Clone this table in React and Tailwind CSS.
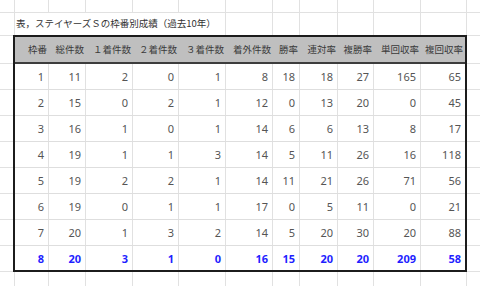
const HEADERS = ['枠番', '総件数', '１着件数', '２着件数', '３着件数', '着外件数', '勝率', '連対率', '複勝率', '単回収率', '複回収率'];

const ROWS = [
  [1, 11, 2, 0, 1, 8, 18, 18, 27, 165, 65],
  [2, 15, 0, 2, 1, 12, 0, 13, 20, 0, 45],
  [3, 16, 1, 0, 1, 14, 6, 6, 13, 8, 17],
  [4, 19, 1, 1, 3, 14, 5, 11, 26, 16, 118],
  [5, 19, 2, 2, 1, 14, 11, 21, 26, 71, 56],
  [6, 19, 0, 1, 1, 17, 0, 5, 11, 0, 21],
  [7, 20, 1, 3, 2, 14, 5, 20, 30, 20, 88],
];

const TOTAL = [8, 20, 3, 1, 0, 16, 15, 20, 20, 209, 58];

// table column widths (right gridline included)
const COLS = ['w-[34px]', 'w-[37px]', 'w-[47px]', 'w-[46px]', 'w-[47px]', 'w-[47px]', 'w-[27px]', 'w-[38px]', 'w-[36px]', 'w-[47px]', 'w-[44px]'];

// sheet columns outside the table
const SHEET = ['w-[15px]', 'w-[34px]', 'w-[37px]', 'w-[47px]', 'w-[46px]', 'w-[47px]', 'w-[47px]', 'w-[27px]', 'w-[38px]', 'w-[36px]', 'w-[47px]', 'w-[46px]'];
const TITLE_REST = ['w-[47px]', 'w-[27px]', 'w-[38px]', 'w-[36px]', 'w-[47px]', 'w-[46px]'];

function SheetRow({ cols, height, bottom }) {
  return (
    <div className={`flex ${height} shrink-0`}>
      {cols.map((w, i) => (
        <div key={i} className={`${w} shrink-0 border-r border-[#e1e1e1] ${bottom ? 'border-b' : ''}`} />
      ))}
      <div className={`flex-1 ${bottom ? 'border-b border-[#e1e1e1]' : ''}`} />
    </div>
  );
}

function Margin({ className }) {
  return (
    <div className={`${className} shrink-0 flex flex-col`}>
      <div className="h-[29px] border-t border-b border-[#e1e1e1]" />
      {[0, 1, 2, 3, 4, 5, 6].map((i) => (
        <div key={i} className="h-[26px] border-b border-[#e1e1e1]" />
      ))}
      <div className="h-[26px] border-b border-[#e1e1e1]" />
    </div>
  );
}

function DataRow({ values, last }) {
  return (
    <div className={`flex shrink-0 ${last ? 'h-[24px]' : 'h-[26px] border-b border-[#dedede]'}`}>
      {values.map((v, i) => (
        <div
          key={i}
          className={`${COLS[i]} shrink-0 flex items-center justify-end pr-[4px] ${i < values.length - 1 ? 'border-r border-[#e1e1e1]' : ''} ${
            last ? 'text-[#1f1fff] font-bold' : 'text-[#555555]'
          }`}
        >
          {v}
        </div>
      ))}
    </div>
  );
}

export default function App() {
  return (
    <div className="w-[480px] h-[286px] overflow-hidden bg-white flex flex-col font-['Noto_Sans','Noto_Sans_CJK_JP',sans-serif] text-[11px] leading-none">
      <SheetRow cols={SHEET} height="h-[13px]" bottom />

      <div className="flex h-[22px] shrink-0">
        <div className="w-[15px] shrink-0 border-r border-[#e1e1e1]" />
        <div className="w-[211px] shrink-0 border-r border-[#e1e1e1] flex items-center pl-px text-[9.5px] text-[#333333] font-['Noto_Sans_CJK_JP',sans-serif] whitespace-nowrap">
          表，ステイヤーズＳの枠番別成績（過去10年）
        </div>
        {TITLE_REST.map((w, i) => (
          <div key={i} className={`${w} shrink-0 border-r border-[#e1e1e1]`} />
        ))}
        <div className="flex-1" />
      </div>

      <div className="flex h-[237px] shrink-0">
        <Margin className="w-[13px]" />
        <div className="w-[454px] shrink-0 border-2 border-[#1c1c1c] flex flex-col">
          <div className="flex h-[27px] shrink-0 bg-[#bfbfbf] border-b-2 border-[#3d3d3d]">
            {HEADERS.map((h, i) => (
              <div
                key={i}
                className={`${COLS[i]} shrink-0 flex items-center justify-end pr-[2px] text-[9.5px] text-[#3a3a3a] font-['Noto_Sans_CJK_JP',sans-serif] whitespace-nowrap`}
              >
                {h}
              </div>
            ))}
          </div>
          {ROWS.map((r, i) => (
            <DataRow key={i} values={r} />
          ))}
          <DataRow values={TOTAL} last />
        </div>
        <Margin className="flex-1" />
      </div>

      <SheetRow cols={SHEET} height="flex-1" />
    </div>
  );
}
